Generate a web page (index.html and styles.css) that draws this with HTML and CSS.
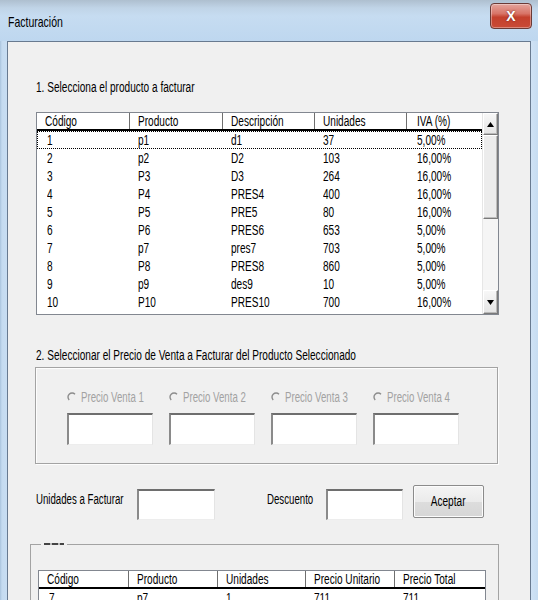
FILE: index.html
```html
<!DOCTYPE html>
<html lang="es">
<head>
<meta charset="utf-8">
<title>Facturación</title>
<link rel="stylesheet" href="styles.css">
</head>
<body>
<div class="window">
  <div class="titlebar">
    <span class="title">Facturación</span>
    <div class="close">X</div>
  </div>
  <div class="client">
    <div class="step step1">1. Selecciona el producto a facturar</div>
    <div class="listbox">
      <div class="lb-main">
        <div class="lb-head">
          <span>Código</span><span>Producto</span><span>Descripción</span><span>Unidades</span><span>IVA (%)</span>
        </div>
        <div class="lb-row sel"><span>1</span><span>p1</span><span>d1</span><span>37</span><span>5,00%</span></div>
        <div class="lb-row"><span>2</span><span>p2</span><span>D2</span><span>103</span><span>16,00%</span></div>
        <div class="lb-row"><span>3</span><span>P3</span><span>D3</span><span>264</span><span>16,00%</span></div>
        <div class="lb-row"><span>4</span><span>P4</span><span>PRES4</span><span>400</span><span>16,00%</span></div>
        <div class="lb-row"><span>5</span><span>P5</span><span>PRE5</span><span>80</span><span>16,00%</span></div>
        <div class="lb-row"><span>6</span><span>P6</span><span>PRES6</span><span>653</span><span>5,00%</span></div>
        <div class="lb-row"><span>7</span><span>p7</span><span>pres7</span><span>703</span><span>5,00%</span></div>
        <div class="lb-row"><span>8</span><span>P8</span><span>PRES8</span><span>860</span><span>5,00%</span></div>
        <div class="lb-row"><span>9</span><span>p9</span><span>des9</span><span>10</span><span>5,00%</span></div>
        <div class="lb-row"><span>10</span><span>P10</span><span>PRES10</span><span>700</span><span>16,00%</span></div>
      </div>
      <div class="scrollbar">
        <div class="sb-btn up"><svg width="7" height="5" viewBox="0 0 7 5"><path d="M3.5 0 L7 5 L0 5 Z" fill="#000"/></svg></div>
        <div class="sb-thumb"></div>
        <div class="sb-track"></div>
        <div class="sb-btn down"><svg width="7" height="5" viewBox="0 0 7 5"><path d="M0 0 L7 0 L3.5 5 Z" fill="#000"/></svg></div>
      </div>
    </div>

    <div class="step step2">2. Seleccionar el Precio de Venta a Facturar del Producto Seleccionado</div>
    <div class="group prices">
      <div class="price-col">
        <div class="radio"><svg class="radio-icon" width="10" height="10" viewBox="0 0 10 10"><path d="M8 2.2 A4 4 0 1 0 2.2 8" fill="none" stroke="#8c8c8c" stroke-width="1.4"/></svg><span class="radio-label">Precio Venta 1</span></div>
        <div class="textbox"></div>
      </div>
      <div class="price-col">
        <div class="radio"><svg class="radio-icon" width="10" height="10" viewBox="0 0 10 10"><path d="M8 2.2 A4 4 0 1 0 2.2 8" fill="none" stroke="#8c8c8c" stroke-width="1.4"/></svg><span class="radio-label">Precio Venta 2</span></div>
        <div class="textbox"></div>
      </div>
      <div class="price-col">
        <div class="radio"><svg class="radio-icon" width="10" height="10" viewBox="0 0 10 10"><path d="M8 2.2 A4 4 0 1 0 2.2 8" fill="none" stroke="#8c8c8c" stroke-width="1.4"/></svg><span class="radio-label">Precio Venta 3</span></div>
        <div class="textbox"></div>
      </div>
      <div class="price-col">
        <div class="radio"><svg class="radio-icon" width="10" height="10" viewBox="0 0 10 10"><path d="M8 2.2 A4 4 0 1 0 2.2 8" fill="none" stroke="#8c8c8c" stroke-width="1.4"/></svg><span class="radio-label">Precio Venta 4</span></div>
        <div class="textbox"></div>
      </div>
    </div>

    <div class="units-row">
      <span class="lbl lbl-units">Unidades a Facturar</span>
      <div class="textbox tb-units"></div>
      <span class="lbl lbl-desc">Descuento</span>
      <div class="textbox tb-desc"></div>
      <div class="button"><span class="btn-text">Aceptar</span></div>
    </div>

    <fieldset class="detail">
      <legend><span class="legend-mark"></span></legend>
      <div class="dt">
        <div class="dt-head"><span>Código</span><span>Producto</span><span>Unidades</span><span>Precio Unitario</span><span>Precio Total</span></div>
        <div class="dt-row"><span>7</span><span>p7</span><span>1</span><span>711</span><span>711</span></div>
      </div>
    </fieldset>
  </div>
</div>
</body>
</html>
```

FILE: styles.css
```css
* { box-sizing: border-box; }
html, body { margin: 0; padding: 0; }
body {
  width: 538px;
  height: 600px;
  overflow: hidden;
  font-family: "Liberation Sans", Arial, sans-serif;
  font-size: 14px;
  color: #000;
  white-space: nowrap;
}
.window {
  width: 538px;
  height: 600px;
  background: linear-gradient(90deg, #a9c3dd 0, #c5dbf0 2px, #c8ddf2 7px, #cfe2f5 531px, #c6dcf1 538px);
  display: flex;
  flex-direction: column;
  overflow: hidden;
}
.titlebar {
  height: 41px;
  flex: none;
  display: flex;
  align-items: flex-start;
  justify-content: space-between;
  background: linear-gradient(180deg, #aebfcf 0, #c0d4e7 8px, #c6dcf1 16px, #bed7ef 41px);
  padding: 0 6px 0 8px;
}
.title {
  display: inline-block;
  margin-top: 14px;
  font-size: 15px;
  line-height: 16px;
  transform: scaleX(0.7);
  transform-origin: 0 50%;
}
.close {
  margin-top: 3px;
  width: 42px;
  height: 26px;
  border: 1px solid #6a3a36;
  border-radius: 4px;
  background: linear-gradient(180deg, #e4a59d 0, #d87467 40%, #c4402d 55%, #c94a36 100%);
  color: #fff;
  font-weight: bold;
  font-size: 14px;
  line-height: 24px;
  text-align: center;
  text-shadow: 0 0 2px #6b2018;
  box-shadow: inset 0 0 0 1px rgba(255,255,255,0.35);
}
.client {
  flex: 1;
  margin: 0 7px;
  border: 1px solid #687a90;
  border-bottom: none;
  background: #f0f0f0;
  padding: 37px 0 0 28px;
}
.step {
  line-height: 16px;
  transform: scaleX(0.72);
  transform-origin: 0 50%;
}
.listbox {
  margin-top: 17px;
  width: 463px;
  height: 203px;
  border: 1px solid #828790;
  background: #fff;
  display: flex;
}
.lb-main {
  width: 445px;
  padding-bottom: 3px;
}
.lb-head, .lb-row {
  display: grid;
  grid-template-columns: 93px 93px 92px 92px 75px;
}
.lb-head {
  height: 18px;
  border-bottom: 2px solid #000;
  line-height: 16px;
  background-image:
    linear-gradient(#6f6f6f, #6f6f6f),
    linear-gradient(#6f6f6f, #6f6f6f),
    linear-gradient(#6f6f6f, #6f6f6f),
    linear-gradient(#6f6f6f, #6f6f6f);
  background-size: 1px 100%;
  background-repeat: no-repeat;
  background-position: 92px 0, 185px 0, 277px 0, 369px 0;
}
.lb-head span, .lb-row span, .dt-head span, .dt-row span {
  padding-left: 8px;
  transform: scaleX(0.72);
  transform-origin: 8px 50%;
}
.lb-head span:last-child { padding-left: 10px; transform-origin: 10px 50%; }
.lb-row {
  height: 18px;
  line-height: 18px;
}
.lb-row span:first-child, .lb-row span:last-child { padding-left: 10px; transform-origin: 10px 50%; }
.lb-row.sel { outline: 1px dotted #000; outline-offset: -1px; }
.scrollbar {
  width: 16px;
  display: flex;
  flex-direction: column;
  background: #f4f4f4;
  border-left: 1px solid #e6e6e6;
}
.sb-btn {
  height: 22px;
  display: flex;
  align-items: center;
  justify-content: center;
  background: linear-gradient(180deg, #f7f7f7, #e4e4e4);
  border: 1px solid #fff;
  border-right-color: #7a7a7a;
  border-bottom-color: #7a7a7a;
  box-shadow: inset -1px -1px 0 #b9b9b9;
}
.sb-btn.down { height: 24px; }
.sb-thumb {
  height: 84px;
  background: #ececec;
  border: 1px solid #fff;
  border-right-color: #7a7a7a;
  border-bottom-color: #7a7a7a;
  box-shadow: inset -1px -1px 0 #bdbdbd;
}
.sb-track { flex: 1; background: #f5f5f5; }
.step2 { margin-top: 32px; }
.group {
  border: 1px solid #a3a3a3;
  box-shadow: inset 1px 1px 0 #fdfdfd, 1px 1px 0 #fdfdfd;
}
.prices {
  margin-top: 4px;
  margin-left: -1px;
  width: 463px;
  height: 97px;
  padding: 21px 0 0 31px;
  display: flex;
  gap: 16px;
}
.price-col {
  width: 86px;
  display: flex;
  flex-direction: column;
  gap: 8px;
}
.radio {
  display: flex;
  align-items: center;
  height: 16px;
  color: #a2a2a2;
  line-height: 16px;
}
.radio-icon { margin: 0 4px 0 0; flex: none; }
.radio-label {
  display: inline-block;
  transform: scaleX(0.69);
  transform-origin: 0 50%;
}
.textbox {
  background: #fff;
  border-top: 2px solid #6e6e6e;
  border-left: 2px solid #8a8a8a;
  border-right: 1px solid #e4e4e4;
  border-bottom: 1px solid #ededed;
  height: 32px;
  width: 86px;
}
.units-row {
  margin-top: 21px;
  height: 36px;
  display: flex;
  align-items: flex-start;
}
.lbl {
  margin-top: 6px;
  line-height: 16px;
  transform: scaleX(0.69);
  transform-origin: 0 50%;
}
.lbl-units { width: 101px; flex: none; }
.tb-units { margin-top: 4px; width: 78px; height: 31px; }
.lbl-desc { margin-left: 52px; width: 59px; flex: none; }
.tb-desc { margin-top: 4px; width: 77px; height: 31px; }
.button {
  margin: 0 0 0 10px;
  width: 71px;
  height: 33px;
  line-height: 31px;
  text-align: center;
  background: linear-gradient(180deg, #f4f4f4 0, #ebebeb 50%, #dddddd 51%, #d6d6d6 100%);
  border: 1px solid #8b8b8b;
  border-radius: 2px;
  box-shadow: inset 0 0 0 1px #fcfcfc;
}
.btn-text { display: inline-block; transform: scaleX(0.72); }
.detail {
  margin: 19px 0 0 -6px;
  padding: 0 0 0 7px;
  width: 469px;
  height: 80px;
  border: 1px solid #a3a3a3;
  min-width: 0;
}
.detail legend {
  padding: 0 3px;
  margin-left: 3px;
  height: 8px;
  line-height: 8px;
  font-size: 8px;
}
.legend-mark {
  display: inline-block;
  width: 20px;
  height: 2px;
  vertical-align: middle;
  background: repeating-linear-gradient(90deg, #444 0 6px, #bbb 6px 8px);
}
.dt {
  margin-top: 22px;
  width: 448px;
  border: 1px solid #828790;
  border-bottom: none;
  background: #fff;
}
.dt-head, .dt-row {
  display: grid;
  grid-template-columns: 90px 89px 88px 89px 90px;
}
.dt-head {
  height: 18px;
  line-height: 16px;
  border-bottom: 2px solid #000;
  background-image:
    linear-gradient(#6f6f6f, #6f6f6f),
    linear-gradient(#6f6f6f, #6f6f6f),
    linear-gradient(#6f6f6f, #6f6f6f),
    linear-gradient(#6f6f6f, #6f6f6f);
  background-size: 1px 100%;
  background-repeat: no-repeat;
  background-position: 89px 0, 178px 0, 266px 0, 355px 0;
}
.dt-row { height: 18px; line-height: 18px; }
.dt-row span:first-child { padding-left: 10px; transform-origin: 10px 50%; }
```
